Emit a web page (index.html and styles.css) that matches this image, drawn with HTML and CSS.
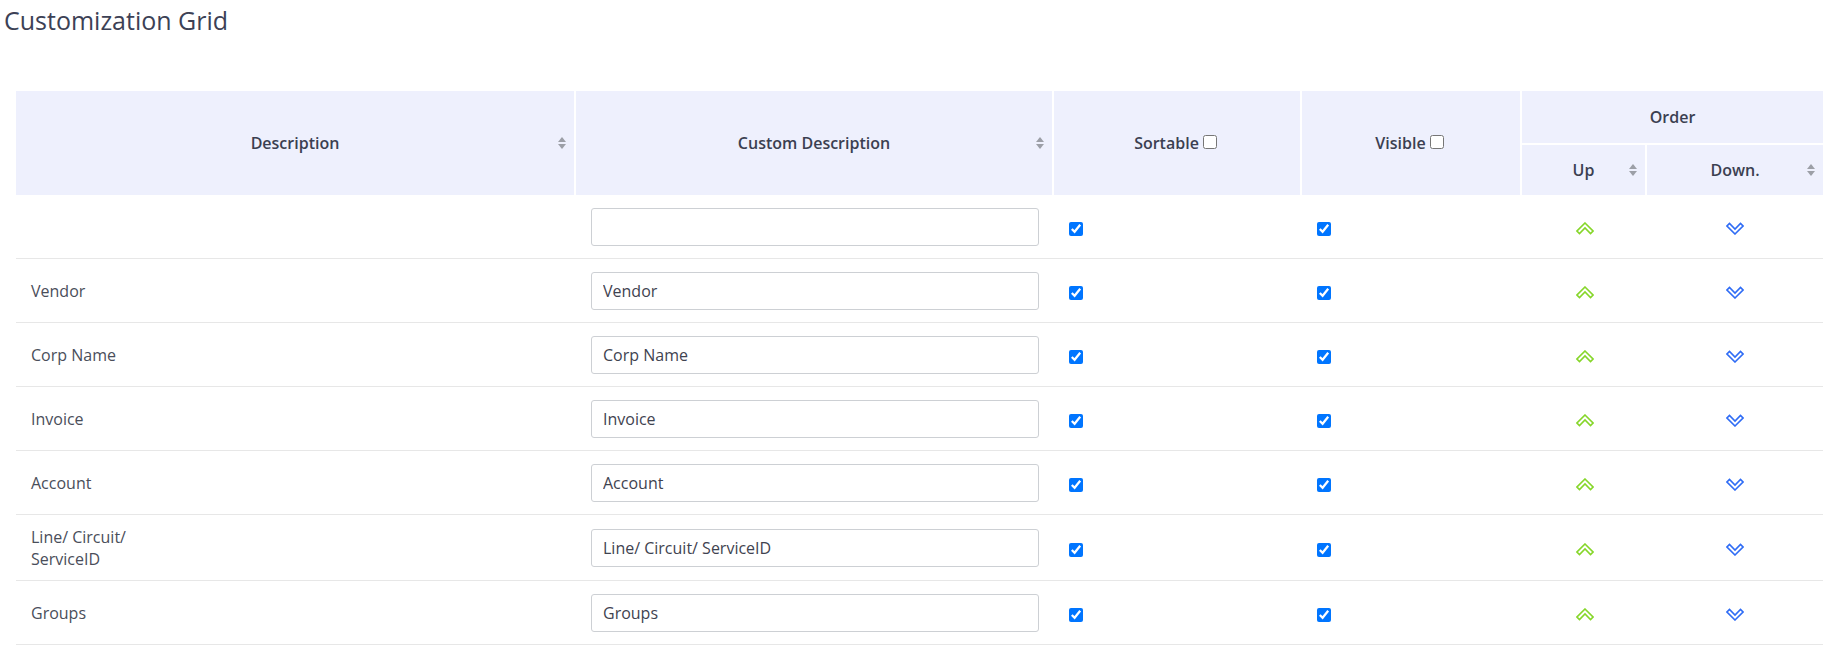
FILE: index.html
```html
<!DOCTYPE html>
<html lang="en">
<head>
    <meta charset="UTF-8">
    <title>Customization Grid</title>
    <meta name="viewport" content="width=device-width, initial-scale=1">
    <link rel="stylesheet" href="styles.css">
</head>
<body>
    <svg class="sprite" xmlns="http://www.w3.org/2000/svg">
        <symbol id="sort" viewBox="0 0 8 12">
            <path d="M4 0 L8 5 L0 5 Z"/>
            <path d="M4 12 L8 7 L0 7 Z"/>
        </symbol>
        <symbol id="chev-up" viewBox="0 0 18 13">
            <path d="M9 1 L17 9 L14.5 11.5 L9 6 L3.5 11.5 L1 9 Z"/>
        </symbol>
        <symbol id="chev-down" viewBox="0 0 18 13">
            <path d="M9 12 L17 4 L14.5 1.5 L9 7 L3.5 1.5 L1 4 Z"/>
        </symbol>
    </svg>

    <h1 class="page-title">Customization Grid</h1>

    <div class="grid-wrap">
        <table class="grid">
            <colgroup>
                <col class="c-desc">
                <col class="c-custom">
                <col class="c-sortable">
                <col class="c-visible">
                <col class="c-up">
                <col class="c-down">
            </colgroup>
            <thead>
                <tr class="head-top">
                    <th rowspan="2" class="sort">Description<svg class="sort-icon"><use href="#sort"/></svg></th>
                    <th rowspan="2" class="sort">Custom Description<svg class="sort-icon"><use href="#sort"/></svg></th>
                    <th rowspan="2">Sortable<input type="checkbox"></th>
                    <th rowspan="2">Visible<input type="checkbox"></th>
                    <th colspan="2" class="group">Order</th>
                </tr>
                <tr class="head-sub">
                    <th class="sort">Up<svg class="sort-icon"><use href="#sort"/></svg></th>
                    <th class="sort last">Down.<svg class="sort-icon"><use href="#sort"/></svg></th>
                </tr>
            </thead>
            <tbody>
                <tr>
                    <td class="desc"></td>
                    <td><input type="text" class="field" value=""></td>
                    <td><input type="checkbox" checked></td>
                    <td><input type="checkbox" checked></td>
                    <td class="move"><svg class="arrow up"><use href="#chev-up"/></svg></td>
                    <td class="move"><svg class="arrow down"><use href="#chev-down"/></svg></td>
                </tr>
                <tr>
                    <td class="desc">Vendor</td>
                    <td><input type="text" class="field" value="Vendor"></td>
                    <td><input type="checkbox" checked></td>
                    <td><input type="checkbox" checked></td>
                    <td class="move"><svg class="arrow up"><use href="#chev-up"/></svg></td>
                    <td class="move"><svg class="arrow down"><use href="#chev-down"/></svg></td>
                </tr>
                <tr>
                    <td class="desc">Corp Name</td>
                    <td><input type="text" class="field" value="Corp Name"></td>
                    <td><input type="checkbox" checked></td>
                    <td><input type="checkbox" checked></td>
                    <td class="move"><svg class="arrow up"><use href="#chev-up"/></svg></td>
                    <td class="move"><svg class="arrow down"><use href="#chev-down"/></svg></td>
                </tr>
                <tr>
                    <td class="desc">Invoice</td>
                    <td><input type="text" class="field" value="Invoice"></td>
                    <td><input type="checkbox" checked></td>
                    <td><input type="checkbox" checked></td>
                    <td class="move"><svg class="arrow up"><use href="#chev-up"/></svg></td>
                    <td class="move"><svg class="arrow down"><use href="#chev-down"/></svg></td>
                </tr>
                <tr>
                    <td class="desc">Account</td>
                    <td><input type="text" class="field" value="Account"></td>
                    <td><input type="checkbox" checked></td>
                    <td><input type="checkbox" checked></td>
                    <td class="move"><svg class="arrow up"><use href="#chev-up"/></svg></td>
                    <td class="move"><svg class="arrow down"><use href="#chev-down"/></svg></td>
                </tr>
                <tr>
                    <td class="desc two-line">Line/ Circuit/<br>ServiceID</td>
                    <td><input type="text" class="field" value="Line/ Circuit/ ServiceID"></td>
                    <td><input type="checkbox" checked></td>
                    <td><input type="checkbox" checked></td>
                    <td class="move"><svg class="arrow up"><use href="#chev-up"/></svg></td>
                    <td class="move"><svg class="arrow down"><use href="#chev-down"/></svg></td>
                </tr>
                <tr>
                    <td class="desc">Groups</td>
                    <td><input type="text" class="field" value="Groups"></td>
                    <td><input type="checkbox" checked></td>
                    <td><input type="checkbox" checked></td>
                    <td class="move"><svg class="arrow up"><use href="#chev-up"/></svg></td>
                    <td class="move"><svg class="arrow down"><use href="#chev-down"/></svg></td>
                </tr>
            </tbody>
        </table>
    </div>
</body>
</html>
```

FILE: styles.css
```css
body {
    font-family: 'Open Sans', Arial, sans-serif;
    background: #fff;
    color: #4a4e5a;
    margin: 0;
    padding: 0;
    overflow: hidden;
}
.sprite {
    display: none;
}
.page-title {
    font-size: 25px;
    font-weight: 400;
    line-height: 29px;
    color: #3c4155;
    margin: 0;
    padding: 6px 0 0 4px;
}
.grid-wrap {
    margin-top: 56px;
    padding-left: 16px;
}
.grid {
    width: 1807px;
    table-layout: fixed;
    border-collapse: separate;
    border-spacing: 0;
    font-size: 16px;
}
.c-desc { width: 560px; }
.c-custom { width: 478px; }
.c-sortable { width: 248px; }
.c-visible { width: 220px; }
.c-up { width: 125px; }
.c-down { width: 176px; }

.grid th {
    background: #eef0fd;
    color: #3b3f51;
    font-weight: 600;
    text-align: center;
    vertical-align: middle;
    padding: 0;
    border-right: 2px solid #fff;
    position: relative;
}
.grid th.last {
    border-right: none;
}
.grid th.group {
    border-right: none;
    border-bottom: 2px solid #fff;
}
.head-top {
    height: 54px;
}
.head-sub {
    height: 50px;
}
.grid th input[type="checkbox"] {
    width: 14px;
    height: 14px;
    margin: 3px 3px 3px 4px;
}
.sort-icon {
    position: absolute;
    right: 8px;
    top: 50%;
    width: 8px;
    height: 12px;
    margin-top: -6px;
    fill: #9c9fa7;
}

.grid td {
    height: 38px;
    padding: 13px 15px 12px;
    border-bottom: 1px solid #e7e7e7;
    vertical-align: middle;
    line-height: 22px;
}
.grid td.two-line {
    padding-top: 11px;
    padding-bottom: 10px;
}
.grid td input[type="checkbox"] {
    margin: 0;
    width: 14px;
    height: 14px;
    vertical-align: middle;
}
.field {
    box-sizing: border-box;
    width: 100%;
    height: 38px;
    padding: 6px 11px;
    font-family: inherit;
    font-size: 16px;
    color: #3f4350;
    background: #fff;
    border: 1px solid #cdd0d4;
    border-radius: 3px;
    display: block;
}
.move {
    text-align: center;
}
.arrow {
    width: 18px;
    height: 13px;
    fill: none;
    stroke-width: 1.6;
    vertical-align: middle;
}
.arrow.up {
    stroke: #86d62a;
}
.arrow.down {
    stroke: #2f6cf5;
}
```
